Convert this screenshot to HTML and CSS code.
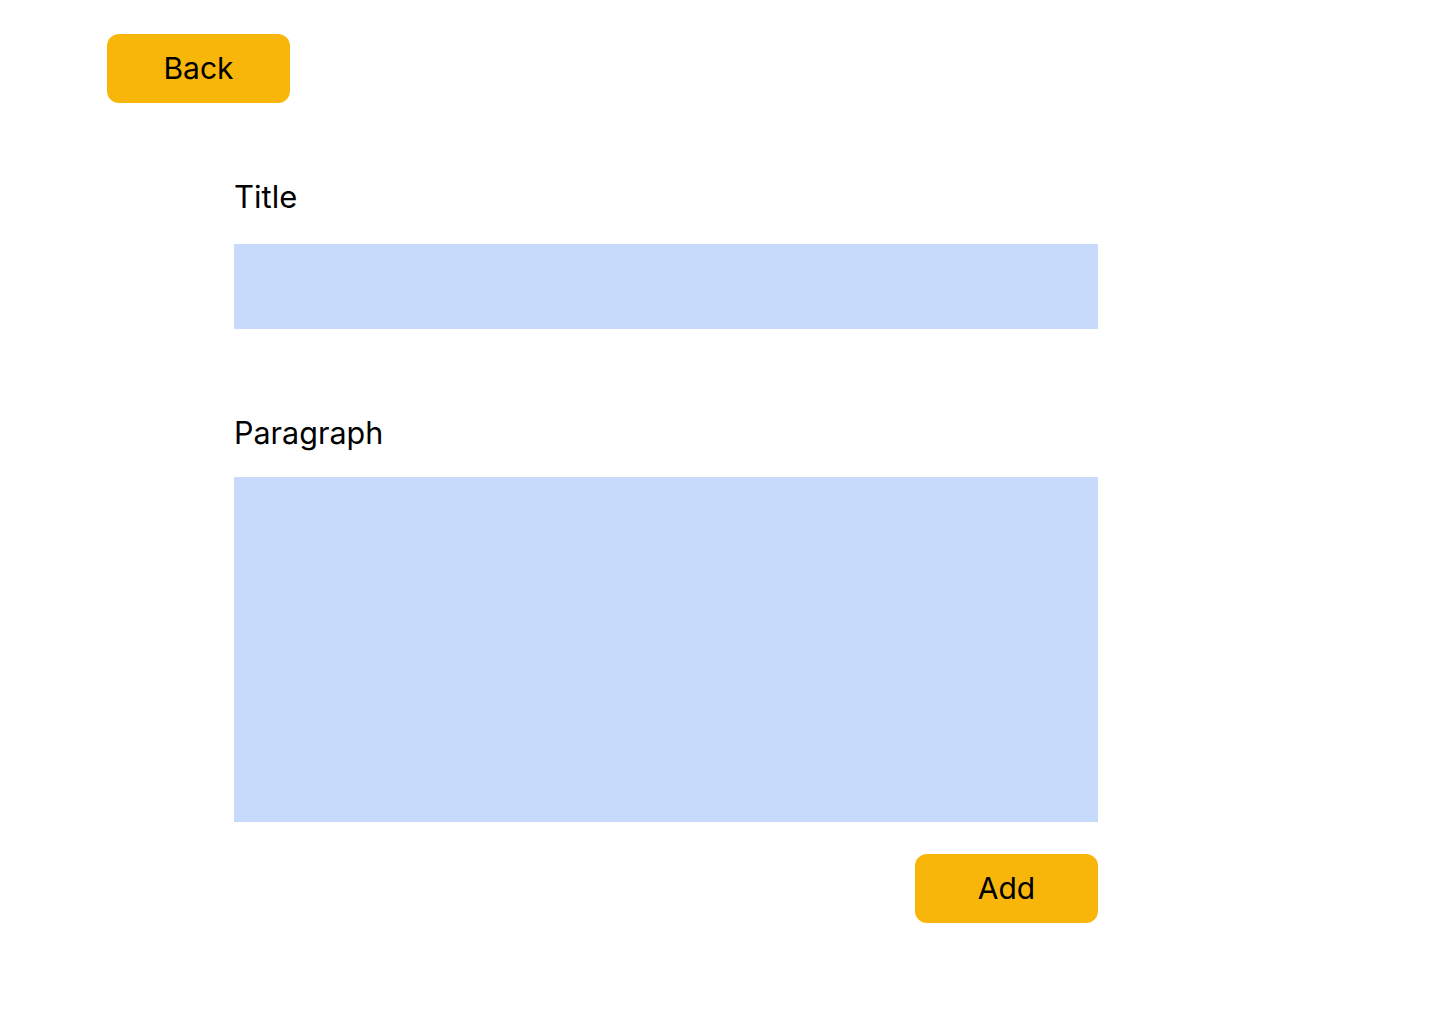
FILE: index.html
```html
<!DOCTYPE html>
<html lang="en">
<head>
<meta charset="utf-8">
<title>Add post</title>
<link rel="stylesheet" href="styles.css">
</head>
<body>
<div class="page">
  <div class="topbar">
    <button class="btn" type="button">Back</button>
  </div>
  <form class="form">
    <label class="label label-title" for="title">Title</label>
    <input class="field field-title" id="title" type="text">
    <label class="label label-para" for="para">Paragraph</label>
    <textarea class="field field-para" id="para"></textarea>
    <div class="actions">
      <button class="btn" type="button">Add</button>
    </div>
  </form>
</div>
</body>
</html>
```

FILE: styles.css
```css
* { box-sizing: border-box; }
html, body { margin: 0; padding: 0; background: #ffffff; }
body {
  font-family: Inter, "Liberation Sans", sans-serif;
  color: #000000;
}
.page {
  width: 1440px;
  min-height: 1024px;
  padding: 34px 0 0 107px;
}
.topbar { display: flex; }
.btn {
  width: 183px;
  height: 69px;
  border: none;
  border-radius: 12px;
  background: #F8B60A;
  color: #000000;
  font-family: Inter, "Liberation Sans", sans-serif;
  font-size: 30px;
  font-weight: 400;
  padding: 0 0 1px 0;
  display: flex;
  align-items: center;
  justify-content: center;
}
.form {
  display: flex;
  flex-direction: column;
  width: 864px;
  margin: 77px 0 0 127px;
}
.label {
  display: block;
  font-size: 30.5px;
  line-height: 34px;
  height: 34px;
}
.label-title { margin-bottom: 30px; font-size: 31px; }
.field {
  display: block;
  width: 864px;
  border: none;
  outline: none;
  background: #C8DAFB;
  margin: 0;
  padding: 0;
  resize: none;
  font-family: inherit;
}
.field-title { height: 85px; }
.label-para { margin-top: 87px; margin-bottom: 27px; }
.field-para { height: 345px; }
.actions {
  display: flex;
  justify-content: flex-end;
  margin-top: 32px;
}
```
